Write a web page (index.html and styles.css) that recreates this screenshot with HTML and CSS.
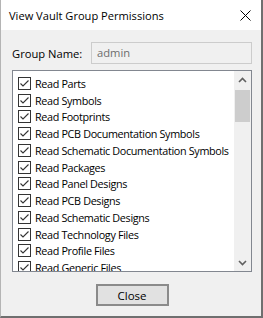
FILE: index.html
```html
<!DOCTYPE html>
<html lang="en">

<head>
    <meta charset="UTF-8" />
    <title>View Vault Group Permissions</title>
    <link rel="stylesheet" href="styles.css">
</head>

<body>
    <div class="window">
        <div class="titlebar">
            <span class="title">View Vault Group Permissions</span>
            <svg class="close-x" width="11" height="11" viewBox="0 0 11 11">
                <path d="M0.5 0.5 L10.5 10.5 M10.5 0.5 L0.5 10.5" stroke="#000" stroke-width="1" fill="none" />
            </svg>
        </div>
        <div class="content">
            <div class="group-row">
                <label class="group-label">Group Name:</label>
                <div class="group-input">admin</div>
            </div>
            <div class="listbox">
                <ul class="list">
                    <li class="item"><span class="check"></span>Read Parts</li>
                    <li class="item"><span class="check"></span>Read Symbols</li>
                    <li class="item"><span class="check"></span>Read Footprints</li>
                    <li class="item"><span class="check"></span>Read PCB Documentation Symbols</li>
                    <li class="item"><span class="check"></span>Read Schematic Documentation Symbols</li>
                    <li class="item"><span class="check"></span>Read Packages</li>
                    <li class="item"><span class="check"></span>Read Panel Designs</li>
                    <li class="item"><span class="check"></span>Read PCB Designs</li>
                    <li class="item"><span class="check"></span>Read Schematic Designs</li>
                    <li class="item"><span class="check"></span>Read Technology Files</li>
                    <li class="item"><span class="check"></span>Read Profile Files</li>
                    <li class="item"><span class="check"></span>Read Generic Files</li>
                </ul>
                <div class="scrollbar">
                    <div class="arrow">
                        <svg width="9" height="6" viewBox="0 0 9 6">
                            <path d="M1 5 L4.5 1.5 L8 5" stroke="#606060" stroke-width="1.6" fill="none" />
                        </svg>
                    </div>
                    <div class="track">
                        <div class="thumb"></div>
                    </div>
                    <div class="arrow">
                        <svg width="9" height="6" viewBox="0 0 9 6">
                            <path d="M1 1 L4.5 4.5 L8 1" stroke="#606060" stroke-width="1.6" fill="none" />
                        </svg>
                    </div>
                </div>
            </div>
            <div class="buttons">
                <button class="btn">Close</button>
            </div>
        </div>
    </div>
</body>

</html>
```

FILE: styles.css
```css
* {
    margin: 0;
    padding: 0;
    box-sizing: border-box;
}

body {
    font-family: "Open Sans", "Noto Sans", sans-serif;
    font-size: 11.2px;
    color: #000;
    background: #fff;
}

.window {
    width: 263px;
    height: 318px;
    display: flex;
    flex-direction: column;
    background: #f0f0f0;
    border-left: 1px solid #b4b4b4;
    border-right: 2px solid #6f6f6f;
    border-bottom: 2px solid #6f6f6f;
}

.titlebar {
    height: 30px;
    flex: none;
    display: flex;
    align-items: center;
    justify-content: space-between;
    background: #fff;
    padding: 0 10px 0 8px;
}

.title {
    font-size: 11.1px;
}

.close-x {
    display: block;
}

.content {
    flex: 1;
    display: flex;
    flex-direction: column;
    padding: 12px 9px 0 11px;
}

.group-row {
    display: flex;
    align-items: center;
    height: 22px;
}

.group-label {
    width: 79px;
}

.group-input {
    flex: 1;
    height: 22px;
    border: 1px solid #cccccc;
    background: #f0f0f0;
    color: #6d6d6d;
    padding: 2px 5px;
    line-height: 16px;
}

.listbox {
    margin-top: 6px;
    height: 202px;
    border: 1px solid #828790;
    background: #fff;
    display: flex;
    overflow: hidden;
}

.list {
    flex: 1;
    list-style: none;
    padding: 4px 0 0 5px;
    overflow: hidden;
}

.item {
    height: 16.75px;
    display: flex;
    align-items: center;
    white-space: nowrap;
    font-size: 10.8px;
    letter-spacing: -0.34px;
}

.check {
    width: 13px;
    height: 13px;
    flex: none;
    border: 1px solid #333;
    margin-right: 4px;
    background: #fff url("data:image/svg+xml;utf8,<svg xmlns='http://www.w3.org/2000/svg' width='11' height='11' viewBox='0 0 11 11'><path d='M1.5 5.5 L4 8 L9.5 2.5' stroke='%23333' stroke-width='1.1' fill='none'/></svg>") no-repeat center;
}

.scrollbar {
    width: 17px;
    flex: none;
    background: #f0f0f0;
    display: flex;
    flex-direction: column;
}

.arrow {
    height: 17px;
    display: flex;
    align-items: center;
    justify-content: center;
}

.track {
    flex: 1;
    padding: 2px 1px 0;
}

.thumb {
    height: 32px;
    background: #cdcdcd;
}

.buttons {
    display: flex;
    justify-content: center;
    padding-top: 12px;
}

.btn {
    width: 73px;
    height: 22px;
    font-family: inherit;
    font-size: 11.5px;
    color: #000;
    background: #e1e1e1;
    border: 2px solid #8a8a8a;
}
```
